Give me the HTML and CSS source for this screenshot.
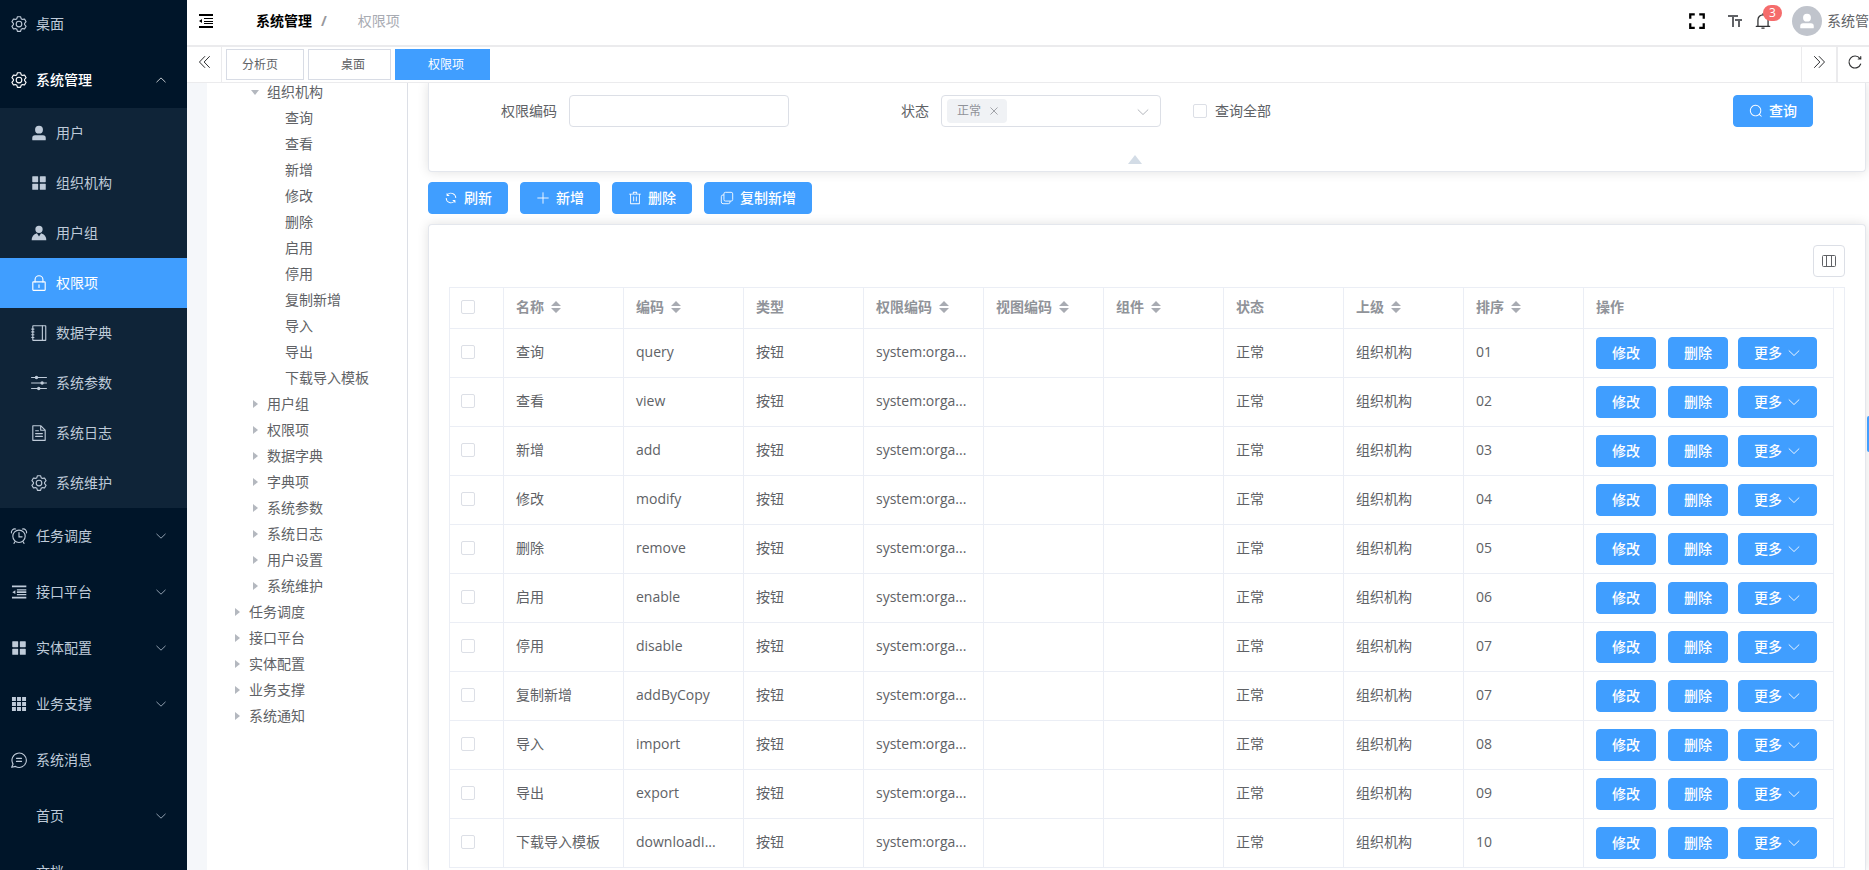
FILE: index.html
```html
<!DOCTYPE html>
<html lang="zh-CN">
<head>
<meta charset="utf-8">
<title>系统管理 / 权限项</title>
<link rel="stylesheet" href="styles.css">
</head>
<body>
<svg class="sprite" aria-hidden="true">
  <symbol id="i-setting" viewBox="0 0 1024 1024"><path fill="currentColor" d="M600.704 64a32 32 0 0 1 30.464 22.208l35.2 109.376c14.784 7.232 28.928 15.36 42.432 24.512l112.384-24.192a32 32 0 0 1 34.432 15.36L944.32 364.8a32 32 0 0 1-4.032 37.504l-77.12 85.12a357.12 357.12 0 0 1 0 49.024l77.12 85.248a32 32 0 0 1 4.032 37.504l-88.704 153.6a32 32 0 0 1-34.432 15.296L708.8 803.904c-13.44 9.088-27.648 17.28-42.368 24.512l-35.264 109.376A32 32 0 0 1 600.704 960H423.296a32 32 0 0 1-30.464-22.208L357.696 828.48a351.616 351.616 0 0 1-42.56-24.64l-112.32 24.256a32 32 0 0 1-34.432-15.36L79.68 659.2a32 32 0 0 1 4.032-37.504l77.12-85.248a357.12 357.12 0 0 1 0-48.896l-77.12-85.248A32 32 0 0 1 79.68 364.8l88.704-153.6a32 32 0 0 1 34.432-15.296l112.32 24.256c13.568-9.152 27.776-17.408 42.56-24.64l35.2-109.312A32 32 0 0 1 423.232 64H600.64zm-23.424 64H446.72l-36.352 113.088-24.512 11.968a294.113 294.113 0 0 0-34.816 20.096l-22.656 15.36-116.224-25.088-65.28 113.152 79.68 88.192-1.92 27.136a293.12 293.12 0 0 0 0 40.192l1.92 27.136-79.808 88.192 65.344 113.152 116.224-25.024 22.656 15.296a294.113 294.113 0 0 0 34.816 20.096l24.512 11.968L446.72 896h130.688l36.48-113.152 24.448-11.904a288.282 288.282 0 0 0 34.752-20.096l22.592-15.296 116.288 25.024 65.28-113.152-79.744-88.192 1.92-27.136a293.12 293.12 0 0 0 0-40.256l-1.92-27.136 79.808-88.128-65.344-113.152-116.288 24.96-22.592-15.232a287.616 287.616 0 0 0-34.752-20.096l-24.448-11.904L577.344 128zM512 320a192 192 0 1 1 0 384 192 192 0 0 1 0-384m0 64a128 128 0 1 0 0 256 128 128 0 0 0 0-256"/></symbol>
  <symbol id="i-user" viewBox="0 0 1024 1024"><path fill="currentColor" d="M288 320a224 224 0 1 0 448 0 224 224 0 1 0-448 0m544 608H160a32 32 0 0 1-32-32v-96a160 160 0 0 1 160-160h448a160 160 0 0 1 160 160v96a32 32 0 0 1-32 32z"/></symbol>
  <symbol id="i-menu" viewBox="0 0 1024 1024"><g fill="currentColor"><rect x="128" y="128" width="336" height="336" rx="32"/><rect x="560" y="128" width="336" height="336" rx="32"/><rect x="128" y="560" width="336" height="336" rx="32"/><rect x="560" y="560" width="336" height="336" rx="32"/></g></symbol>
  <symbol id="i-avatar" viewBox="0 0 1024 1024"><path fill="currentColor" d="M628.736 528.896A416 416 0 0 1 928 928H96a415.872 415.872 0 0 1 299.264-399.104L512 704zM720 304a208 208 0 1 1-416 0 208 208 0 0 1 416 0"/></symbol>
  <symbol id="i-lock" viewBox="0 0 1024 1024"><g fill="none" stroke="currentColor" stroke-width="64" stroke-linecap="round"><rect x="160" y="448" width="704" height="480" rx="32"/><path d="M288 448V320a224 224 0 0 1 448 0v128M512 608v160"/></g></symbol>
  <symbol id="i-notebook" viewBox="0 0 1024 1024"><g fill="none" stroke="currentColor" stroke-width="64" stroke-linecap="round"><rect x="160" y="96" width="736" height="832" rx="16"/><path d="M704 96v832M96 288h128M96 448h128M96 608h128M96 768h128"/></g></symbol>
  <symbol id="i-operation" viewBox="0 0 1024 1024"><path fill="none" stroke="currentColor" stroke-width="68" d="M64 200h896M64 512h896M64 824h896"/><g fill="currentColor"><circle cx="368" cy="200" r="96"/><circle cx="688" cy="512" r="96"/><circle cx="496" cy="824" r="96"/></g></symbol>
  <symbol id="i-document" viewBox="0 0 1024 1024"><g fill="none" stroke="currentColor" stroke-width="64" stroke-linecap="round" stroke-linejoin="round"><path d="M160 96h448l256 256v576H160zM608 96v256h256M320 384h160M320 544h384M320 704h384"/></g></symbol>
  <symbol id="i-clock" viewBox="0 0 1024 1024"><g fill="none" stroke="currentColor" stroke-width="64" stroke-linecap="round"><circle cx="512" cy="528" r="352"/><path d="M512 320v240h176M292 828l-68 100M732 828l68 100M80 336A192 192 0 0 1 320 116M944 336A192 192 0 0 0 704 116"/></g></symbol>
  <symbol id="i-outdent" viewBox="0 0 1024 1024"><path fill="currentColor" d="M112 140h816v104H112zM112 780h816v104H112zM392 350h536v70H392zM392 470h536v100H392zM392 620h536v70H392zM128 520l176-112v224z"/></symbol>
  <symbol id="i-fold" viewBox="0 0 14 14"><path fill="currentColor" d="M0 0h14v2H0zM0 12h14v2H0zM5 4h9v1H5zM5 7h9v1H5zM5 9h9v1H5zM0 7l3-2v4z"/></symbol>
  <symbol id="i-grid" viewBox="0 0 1024 1024"><path fill="currentColor" d="M112 112h224v224H112zM400 112h224v224H400zM688 112h224v224H688zM112 400h224v224H112zM400 400h224v224H400zM688 400h224v224H688zM112 688h224v224H112zM400 688h224v224H400zM688 688h224v224H688z"/></symbol>
  <symbol id="i-chat" viewBox="0 0 1024 1024"><path fill="none" stroke="currentColor" stroke-width="64" stroke-linecap="round" stroke-linejoin="round" d="M174 740A408 408 0 1 1 312 876L98 928zM368 416h288M368 592h288"/></symbol>
  <symbol id="i-down" viewBox="0 0 1024 1024"><path fill="none" stroke="currentColor" stroke-width="64" stroke-linecap="round" stroke-linejoin="round" d="M150 350l362 348 362-348"/></symbol>
  <symbol id="i-up" viewBox="0 0 1024 1024"><path fill="none" stroke="currentColor" stroke-width="64" stroke-linecap="round" stroke-linejoin="round" d="M150 682l362-348 362 348"/></symbol>
  <symbol id="i-left2" viewBox="0 0 1024 1024"><path fill="none" stroke="currentColor" stroke-width="64" stroke-linecap="round" stroke-linejoin="round" d="M560 160L220 512l340 352M860 160L520 512l340 352"/></symbol>
  <symbol id="i-right2" viewBox="0 0 1024 1024"><path fill="none" stroke="currentColor" stroke-width="64" stroke-linecap="round" stroke-linejoin="round" d="M524 160l340 352-340 352M224 160l340 352-340 352"/></symbol>
  <symbol id="i-reload" viewBox="0 0 1024 1024"><path fill="none" stroke="currentColor" stroke-width="72" stroke-linecap="round" d="M876 640A384 384 0 1 1 820 280M880 160v160H720"/></symbol>
  <symbol id="i-refresh" viewBox="0 0 1024 1024"><path fill="currentColor" d="M771.776 794.88A384 384 0 0 1 128 512h64a320 320 0 0 0 555.712 216.448H654.72a32 32 0 1 1 0-64h149.056a32 32 0 0 1 32 32v148.928a32 32 0 1 1-64 0v-50.56zM276.288 295.616h92.992a32 32 0 0 1 0 64H220.16a32 32 0 0 1-32-32V178.56a32 32 0 0 1 64 0v50.56A384 384 0 0 1 896.128 512h-64a320 320 0 0 0-555.776-216.384z"/></symbol>
  <symbol id="i-plus" viewBox="0 0 1024 1024"><path fill="none" stroke="currentColor" stroke-width="64" stroke-linecap="round" d="M512 128v768M128 512h768"/></symbol>
  <symbol id="i-delete" viewBox="0 0 1024 1024"><path fill="currentColor" d="M160 256H96a32 32 0 0 1 0-64h256V95.936a32 32 0 0 1 32-32h256a32 32 0 0 1 32 32V192h256a32 32 0 1 1 0 64h-64v672a32 32 0 0 1-32 32H192a32 32 0 0 1-32-32zm448-64v-64H416v64zM224 896h576V256H224zm192-128a32 32 0 0 1-32-32V416a32 32 0 0 1 64 0v320a32 32 0 0 1-32 32m192 0a32 32 0 0 1-32-32V416a32 32 0 0 1 64 0v320a32 32 0 0 1-32 32"/></symbol>
  <symbol id="i-copy" viewBox="0 0 1024 1024"><g fill="none" stroke="currentColor" stroke-width="64"><rect x="288" y="96" width="640" height="640" rx="112"/><path d="M288 288h-64a128 128 0 0 0-128 128v384a128 128 0 0 0 128 128h384a128 128 0 0 0 128-128v-64"/></g></symbol>
  <symbol id="i-search" viewBox="0 0 1024 1024"><path fill="currentColor" d="m795.904 750.72 124.992 124.928a32 32 0 0 1-45.248 45.248L750.656 795.904a416 416 0 1 1 45.248-45.248zM480 832a352 352 0 1 0 0-704 352 352 0 0 0 0 704"/></symbol>
  <symbol id="i-close" viewBox="0 0 1024 1024"><path fill="none" stroke="currentColor" stroke-width="84" stroke-linecap="round" d="M180 180l664 664M844 180L180 844"/></symbol>
  <symbol id="i-full" viewBox="0 0 16 16"><path fill="none" stroke="currentColor" stroke-width="2" d="M2 6V2h4M10 2h4v4M14 10v4h-4M6 14H2v-4"/></symbol>
  <symbol id="i-size" viewBox="0 0 16 16"><path fill="currentColor" d="M1 2h10v2H7v10H5V4H1zM8 6h7v2h-2v6h-2V8H8z"/></symbol>
  <symbol id="i-bell" viewBox="0 0 1024 1024"><path fill="none" stroke="currentColor" stroke-width="72" stroke-linecap="round" d="M512 96v48M128 816h768M224 816V448a288 288 0 0 1 576 0v368M448 912h128"/></symbol>
  <symbol id="i-columns" viewBox="0 0 16 16"><g fill="none" stroke="currentColor" stroke-width="1"><rect x="1.500" y="2.500" width="13" height="11" rx="1"/><path d="M5.500 3v10M10.500 3v10"/></g></symbol>
</svg>

<div class="app">
  <nav class="sidebar" aria-label="主菜单">
    <a class="item first" href="#"><svg class="mi"><use href="#i-setting"/></svg><span>桌面</span></a>
    <button class="item open" type="button" aria-expanded="true"><svg class="mi"><use href="#i-setting"/></svg><span>系统管理</span><svg class="arrow"><use href="#i-up"/></svg></button>
    <div class="submenu">
      <a class="subitem" href="#"><svg class="mi"><use href="#i-user"/></svg><span>用户</span></a>
      <a class="subitem" href="#"><svg class="mi"><use href="#i-menu"/></svg><span>组织机构</span></a>
      <a class="subitem" href="#"><svg class="mi"><use href="#i-avatar"/></svg><span>用户组</span></a>
      <a class="subitem active" href="#" aria-current="page"><svg class="mi"><use href="#i-lock"/></svg><span>权限项</span></a>
      <a class="subitem" href="#"><svg class="mi"><use href="#i-notebook"/></svg><span>数据字典</span></a>
      <a class="subitem" href="#"><svg class="mi"><use href="#i-operation"/></svg><span>系统参数</span></a>
      <a class="subitem" href="#"><svg class="mi"><use href="#i-document"/></svg><span>系统日志</span></a>
      <a class="subitem" href="#"><svg class="mi"><use href="#i-setting"/></svg><span>系统维护</span></a>
    </div>
    <button class="item" type="button"><svg class="mi"><use href="#i-clock"/></svg><span>任务调度</span><svg class="arrow"><use href="#i-down"/></svg></button>
    <button class="item" type="button"><svg class="mi"><use href="#i-outdent"/></svg><span>接口平台</span><svg class="arrow"><use href="#i-down"/></svg></button>
    <button class="item" type="button"><svg class="mi"><use href="#i-menu"/></svg><span>实体配置</span><svg class="arrow"><use href="#i-down"/></svg></button>
    <button class="item" type="button"><svg class="mi"><use href="#i-grid"/></svg><span>业务支撑</span><svg class="arrow"><use href="#i-down"/></svg></button>
    <a class="item" href="#"><svg class="mi"><use href="#i-chat"/></svg><span>系统消息</span></a>
    <button class="item" type="button"><i class="mi"></i><span>首页</span><svg class="arrow"><use href="#i-down"/></svg></button>
    <a class="item" href="#"><i class="mi"></i><span>文档</span></a>
  </nav>

  <div class="main">
    <header class="header">
      <button class="plain fold" type="button" aria-label="收起菜单"><svg><use href="#i-fold"/></svg></button>
      <nav class="crumbs" aria-label="面包屑"><a href="#">系统管理</a><span class="slash">/</span><span class="here">权限项</span></nav>
      <div class="tools">
        <button class="plain full" type="button" aria-label="全屏"><svg><use href="#i-full"/></svg></button>
        <button class="plain size" type="button" aria-label="字号"><svg><use href="#i-size"/></svg></button>
        <button class="plain bell" type="button" aria-label="消息"><svg><use href="#i-bell"/></svg><span class="badge">3</span></button>
        <span class="avatar"><svg><use href="#i-user"/></svg></span>
        <span class="name">系统管</span>
      </div>
    </header>

    <div class="tabbar">
      <button class="plain tabctl left" type="button" aria-label="向左"><svg><use href="#i-left2"/></svg></button>
      <div class="tabs">
        <button class="tab short" type="button">分析页</button>
        <button class="tab" type="button">桌面</button>
        <button class="tab current" type="button">权限项</button>
      </div>
      <button class="plain tabctl right" type="button" aria-label="向右"><svg><use href="#i-right2"/></svg></button>
      <button class="plain tabctl reload" type="button" aria-label="刷新页面"><svg><use href="#i-reload"/></svg></button>
    </div>

    <div class="body">
      <aside class="treepane">
        <ul class="tree">
          <li class="l2 expanded">组织机构</li>
          <li class="l3">查询</li>
          <li class="l3">查看</li>
          <li class="l3">新增</li>
          <li class="l3">修改</li>
          <li class="l3">删除</li>
          <li class="l3">启用</li>
          <li class="l3">停用</li>
          <li class="l3">复制新增</li>
          <li class="l3">导入</li>
          <li class="l3">导出</li>
          <li class="l3">下载导入模板</li>
          <li class="l2">用户组</li>
          <li class="l2">权限项</li>
          <li class="l2">数据字典</li>
          <li class="l2">字典项</li>
          <li class="l2">系统参数</li>
          <li class="l2">系统日志</li>
          <li class="l2">用户设置</li>
          <li class="l2">系统维护</li>
          <li class="l1">任务调度</li>
          <li class="l1">接口平台</li>
          <li class="l1">实体配置</li>
          <li class="l1">业务支撑</li>
          <li class="l1">系统通知</li>
        </ul>
      </aside>

      <main class="content">
        <section class="card filter">
          <form class="filters">
            <div class="field"><label for="code">权限编码</label><input class="text" id="code" type="text"></div>
            <div class="field"><label for="state">状态</label>
              <div class="selectbox">
                <span class="tag">正常<button class="plain" type="button" aria-label="移除 正常"><svg><use href="#i-close"/></svg></button></span>
                <select id="state"><option value=""></option></select>
                <svg class="caret"><use href="#i-down"/></svg>
              </div>
            </div>
            <label class="all"><input class="check" type="checkbox">查询全部</label>
            <button class="btn search" type="button"><svg><use href="#i-search"/></svg>查询</button>
          </form>
          <button class="plain collapse" type="button" aria-label="收起"></button>
        </section>

        <div class="actions">
          <button class="btn" type="button"><svg><use href="#i-refresh"/></svg>刷新</button>
          <button class="btn" type="button"><svg><use href="#i-plus"/></svg>新增</button>
          <button class="btn" type="button"><svg><use href="#i-delete"/></svg>删除</button>
          <button class="btn" type="button"><svg><use href="#i-copy"/></svg>复制新增</button>
        </div>

        <section class="card list">
          <div class="listtools"><button class="colbtn" type="button" aria-label="列设置"><svg><use href="#i-columns"/></svg></button></div>
          <div class="tablewrap">
            <table>
              <colgroup><col class="c-check"><col><col><col><col><col><col><col><col><col><col class="c-ops"></colgroup>
              <thead><tr><th><input class="check" type="checkbox" aria-label="全选"></th><th>名称<i class="sort"></i></th><th>编码<i class="sort"></i></th><th>类型</th><th>权限编码<i class="sort"></i></th><th>视图编码<i class="sort"></i></th><th>组件<i class="sort"></i></th><th>状态</th><th>上级<i class="sort"></i></th><th>排序<i class="sort"></i></th><th>操作</th></tr></thead>
              <tbody>
                <tr><td><input class="check" type="checkbox" aria-label="选择 查询"></td><td>查询</td><td>query</td><td>按钮</td><td>system:orga...</td><td></td><td></td><td>正常</td><td>组织机构</td><td>01</td><td><div class="ops"><button class="btn" type="button">修改</button><button class="btn" type="button">删除</button><button class="btn more" type="button">更多<svg><use href="#i-down"/></svg></button></div></td></tr>
                <tr><td><input class="check" type="checkbox" aria-label="选择 查看"></td><td>查看</td><td>view</td><td>按钮</td><td>system:orga...</td><td></td><td></td><td>正常</td><td>组织机构</td><td>02</td><td><div class="ops"><button class="btn" type="button">修改</button><button class="btn" type="button">删除</button><button class="btn more" type="button">更多<svg><use href="#i-down"/></svg></button></div></td></tr>
                <tr><td><input class="check" type="checkbox" aria-label="选择 新增"></td><td>新增</td><td>add</td><td>按钮</td><td>system:orga...</td><td></td><td></td><td>正常</td><td>组织机构</td><td>03</td><td><div class="ops"><button class="btn" type="button">修改</button><button class="btn" type="button">删除</button><button class="btn more" type="button">更多<svg><use href="#i-down"/></svg></button></div></td></tr>
                <tr><td><input class="check" type="checkbox" aria-label="选择 修改"></td><td>修改</td><td>modify</td><td>按钮</td><td>system:orga...</td><td></td><td></td><td>正常</td><td>组织机构</td><td>04</td><td><div class="ops"><button class="btn" type="button">修改</button><button class="btn" type="button">删除</button><button class="btn more" type="button">更多<svg><use href="#i-down"/></svg></button></div></td></tr>
                <tr><td><input class="check" type="checkbox" aria-label="选择 删除"></td><td>删除</td><td>remove</td><td>按钮</td><td>system:orga...</td><td></td><td></td><td>正常</td><td>组织机构</td><td>05</td><td><div class="ops"><button class="btn" type="button">修改</button><button class="btn" type="button">删除</button><button class="btn more" type="button">更多<svg><use href="#i-down"/></svg></button></div></td></tr>
                <tr><td><input class="check" type="checkbox" aria-label="选择 启用"></td><td>启用</td><td>enable</td><td>按钮</td><td>system:orga...</td><td></td><td></td><td>正常</td><td>组织机构</td><td>06</td><td><div class="ops"><button class="btn" type="button">修改</button><button class="btn" type="button">删除</button><button class="btn more" type="button">更多<svg><use href="#i-down"/></svg></button></div></td></tr>
                <tr><td><input class="check" type="checkbox" aria-label="选择 停用"></td><td>停用</td><td>disable</td><td>按钮</td><td>system:orga...</td><td></td><td></td><td>正常</td><td>组织机构</td><td>07</td><td><div class="ops"><button class="btn" type="button">修改</button><button class="btn" type="button">删除</button><button class="btn more" type="button">更多<svg><use href="#i-down"/></svg></button></div></td></tr>
                <tr><td><input class="check" type="checkbox" aria-label="选择 复制新增"></td><td>复制新增</td><td>addByCopy</td><td>按钮</td><td>system:orga...</td><td></td><td></td><td>正常</td><td>组织机构</td><td>07</td><td><div class="ops"><button class="btn" type="button">修改</button><button class="btn" type="button">删除</button><button class="btn more" type="button">更多<svg><use href="#i-down"/></svg></button></div></td></tr>
                <tr><td><input class="check" type="checkbox" aria-label="选择 导入"></td><td>导入</td><td>import</td><td>按钮</td><td>system:orga...</td><td></td><td></td><td>正常</td><td>组织机构</td><td>08</td><td><div class="ops"><button class="btn" type="button">修改</button><button class="btn" type="button">删除</button><button class="btn more" type="button">更多<svg><use href="#i-down"/></svg></button></div></td></tr>
                <tr><td><input class="check" type="checkbox" aria-label="选择 导出"></td><td>导出</td><td>export</td><td>按钮</td><td>system:orga...</td><td></td><td></td><td>正常</td><td>组织机构</td><td>09</td><td><div class="ops"><button class="btn" type="button">修改</button><button class="btn" type="button">删除</button><button class="btn more" type="button">更多<svg><use href="#i-down"/></svg></button></div></td></tr>
                <tr><td><input class="check" type="checkbox" aria-label="选择 下载导入模板"></td><td>下载导入模板</td><td>downloadI...</td><td>按钮</td><td>system:orga...</td><td></td><td></td><td>正常</td><td>组织机构</td><td>10</td><td><div class="ops"><button class="btn" type="button">修改</button><button class="btn" type="button">删除</button><button class="btn more" type="button">更多<svg><use href="#i-down"/></svg></button></div></td></tr>
              </tbody>
            </table>
          </div>
        </section>
      </main>
    </div>
  </div>
  <button class="plain drawer" type="button" aria-label="设置"></button>
</div>
</body>
</html>
```

FILE: styles.css
```css
*, *::before { box-sizing: border-box; }
body {
  margin: 0;
  font-family: "Open Sans", "Noto Sans CJK SC", sans-serif;
  font-size: 14px;
  line-height: 20px;
  color: #606266;
  background: #fff;
}
button, input, select { font: inherit; color: inherit; }
button { cursor: pointer; }
a { color: inherit; text-decoration: none; }
svg { display: block; flex: none; }
.sprite { position: absolute; width: 0; height: 0; }
.plain { border: 0; padding: 0; background: none; display: flex; align-items: center; justify-content: center; }

.app { display: flex; height: 100vh; overflow: hidden; position: relative; }

/* sidebar */
.sidebar { flex: 0 0 187px; background: #001529; color: #bfcbd9; overflow: hidden; }
.item, .subitem {
  display: flex; align-items: center; gap: 8px;
  width: 100%; height: 56px; padding: 0 18px 0 10px;
  border: 0; background: none; text-align: left;
}
.item.first { height: 52px; padding-bottom: 4px; }
.item.open { color: #fff; font-weight: 500; }
.subitem { height: 50px; padding-left: 30px; }
.submenu { background: #0f2438; }
.subitem.active { background: #409eff; color: #fff; }
.mi { width: 18px; height: 18px; flex: none; }
.arrow { width: 12px; height: 12px; margin: 0 2px 0 auto; }

/* top bars */
.main { flex: 1; min-width: 0; display: flex; flex-direction: column; }
.header {
  display: flex; align-items: center; height: 47px; flex: none;
  padding: 0 0 3px 12px; border-bottom: 2px solid #ebebed;
}
.fold svg { width: 14px; height: 14px; color: #000; }
.crumbs { display: flex; align-items: center; margin-left: 43px; }
.crumbs a { color: #000; font-weight: 700; }
.slash { margin: 0 31px 0 9px; color: #97989c; font-weight: 700; }
.here { color: #a8abb2; }
.tools { margin-left: auto; display: flex; align-items: center; }
.full { color: #000; }
.full svg { width: 18px; height: 18px; }
.size { margin-left: 21px; }
.size svg { width: 16px; height: 16px; }
.bell { margin-left: 11px; color: #303133; position: relative; }
.bell svg { width: 18px; height: 18px; }
.badge {
  position: absolute; left: 9px; top: -7px; min-width: 19px; padding: 0 6px;
  border-radius: 8px; background: #f56c6c; color: #fff; font-size: 12px; line-height: 16px;
}
.avatar {
  width: 30px; height: 30px; margin-left: 20px; border-radius: 50%;
  background: #c0c4cc; color: #fff; display: flex; align-items: center; justify-content: center;
}
.avatar svg { width: 18px; height: 18px; }
.name { margin-left: 5px; }

.tabbar { display: flex; height: 36px; flex: none; border-bottom: 1px solid #ebebed; }
.tabctl { width: 35px; color: #303133; padding-bottom: 6px; }
.tabctl svg { width: 16px; height: 16px; }
.left { border-right: 1px solid #ebebed; }
.right { border-left: 1px solid #ebebed; }
.reload { border-left: 2px solid #ebebed; width: 33px; padding-left: 2px; }
.tabs { flex: 1; display: flex; align-items: flex-start; gap: 4px; padding: 2px 4px; }
.tab {
  width: 83px; height: 31px; padding: 0 25px 0 0;
  border: 1px solid #d8dce5; background: #fff; color: #606266;
  font-size: 12px; line-height: 29px; text-align: right; white-space: nowrap;
}
.tab.short { width: 78px; }
.tab.current { width: 95px; border-color: #409eff; background: #409eff; color: #fff; }

/* body */
.body { flex: 1; min-height: 0; display: flex; border-left: 20px solid #f5f7fa; }
.treepane { flex: 0 0 201px; border-right: 1px solid #dcdfe6; overflow: hidden; }
.tree { list-style: none; margin: -4px 0 0; padding: 0; }
.tree li { display: flex; align-items: center; height: 26px; cursor: pointer; }
.tree li::before {
  content: ""; width: 5px; margin-right: 9px; flex: none;
  border: 4px solid transparent; border-left: 5px solid #b4b8bf; border-right: 0;
}
.tree .l1 { padding-left: 28px; }
.tree .l2 { padding-left: 46px; }
.tree .l3 { padding-left: 78px; }
.tree .l3::before { display: none; }
.tree .expanded { padding-left: 44px; }
.tree .expanded::before { width: 8px; margin-right: 8px; border: 4px solid transparent; border-top: 5px solid #b4b8bf; border-bottom: 0; }
.content { flex: 1; min-width: 0; padding: 0 3px 0 20px; overflow: hidden; display: flex; flex-direction: column; }
.card { border: 1px solid #e4e7ed; border-radius: 4px; background: #fff; box-shadow: 0 0 12px rgba(0, 0, 0, .12); }
.filter { border-top: 0; border-radius: 0 0 4px 4px; padding: 12px 20px 4px; }
.filters { display: flex; align-items: center; gap: 32px; padding-right: 32px; }
.field { display: flex; align-items: center; }
.field > label { width: 120px; padding-right: 12px; text-align: right; }
.text, .selectbox { width: 220px; height: 32px; border: 1px solid #dcdfe6; border-radius: 4px; background: #fff; padding: 0 11px; }
.selectbox { display: flex; align-items: center; padding: 0 5px; position: relative; }
.tag {
  display: flex; align-items: center; gap: 8px; height: 24px; padding: 0 8px 0 10px; flex: none;
  border-radius: 4px; background: #f0f2f5; color: #909399; font-size: 12px;
}
.tag svg { width: 10px; height: 10px; }
.selectbox select { flex: 1; min-width: 0; height: 30px; border: 0; background: none; appearance: none; outline: 0; }
.caret { position: absolute; right: 10px; top: 9px; width: 14px; height: 14px; color: #a8abb2; pointer-events: none; }
.all { display: flex; align-items: center; gap: 8px; }
.check { appearance: none; display: block; width: 14px; height: 14px; margin: 0; border: 1px solid #dcdfe6; border-radius: 2px; background: #fff; }
.collapse { width: 100%; height: 16px; margin-top: 24px; padding-right: 24px; }
.collapse::before { content: ""; border: 7px solid transparent; border-top: 0; border-bottom: 9px solid #d3dce6; }

.btn {
  display: flex; align-items: center; gap: 6px; height: 32px; padding: 0 15px;
  border: 1px solid #409eff; border-radius: 4px; background: #409eff; color: #fff; font-weight: 500;
}
.btn svg { width: 14px; height: 14px; }
.search { margin-left: auto; }
.actions { display: flex; gap: 12px; padding: 10px 0; }

.list { flex: 1 0 auto; padding: 20px 20px 0; border-bottom: 0; border-radius: 4px 4px 0 0; }
.listtools { display: flex; justify-content: flex-end; padding-bottom: 10px; }
.colbtn { display: flex; align-items: center; justify-content: center; width: 32px; height: 32px; padding: 0; border: 1px solid #dcdfe6; border-radius: 4px; background: #fff; }
.colbtn svg { width: 16px; height: 16px; }
.tablewrap { border: 1px solid #ebeef5; padding-right: 10px; }
table { width: 100%; table-layout: fixed; border-collapse: separate; border-spacing: 0; }
.c-check { width: 54px; }
.c-ops { width: 250px; }
th, td { height: 49px; padding: 0 12px 2px; text-align: left; border-right: 1px solid #ebeef5; border-bottom: 1px solid #ebeef5; white-space: nowrap; font-weight: 400; }
th { height: 41px; color: #909399; font-weight: 700; }
th:first-child, td:first-child { padding-left: 11px; }
td:last-child { padding-bottom: 0; }
tbody tr:last-child td { height: 48px; border-bottom: 0; }
.sort {
  display: inline-block; width: 10px; height: 12px; margin-left: 7px; vertical-align: -1px; background: #a8abb2;
  clip-path: polygon(50% 0, 100% 5px, 0 5px, 0 7px, 100% 7px, 50% 100%, 0 7px, 0 5px);
}
.ops { display: flex; gap: 12px; }
.more { gap: 5px; margin-left: -2px; }

.drawer { position: absolute; right: 0; top: 416px; width: 2px; height: 36px; border-radius: 4px 0 0 4px; background: #409eff; }
```
